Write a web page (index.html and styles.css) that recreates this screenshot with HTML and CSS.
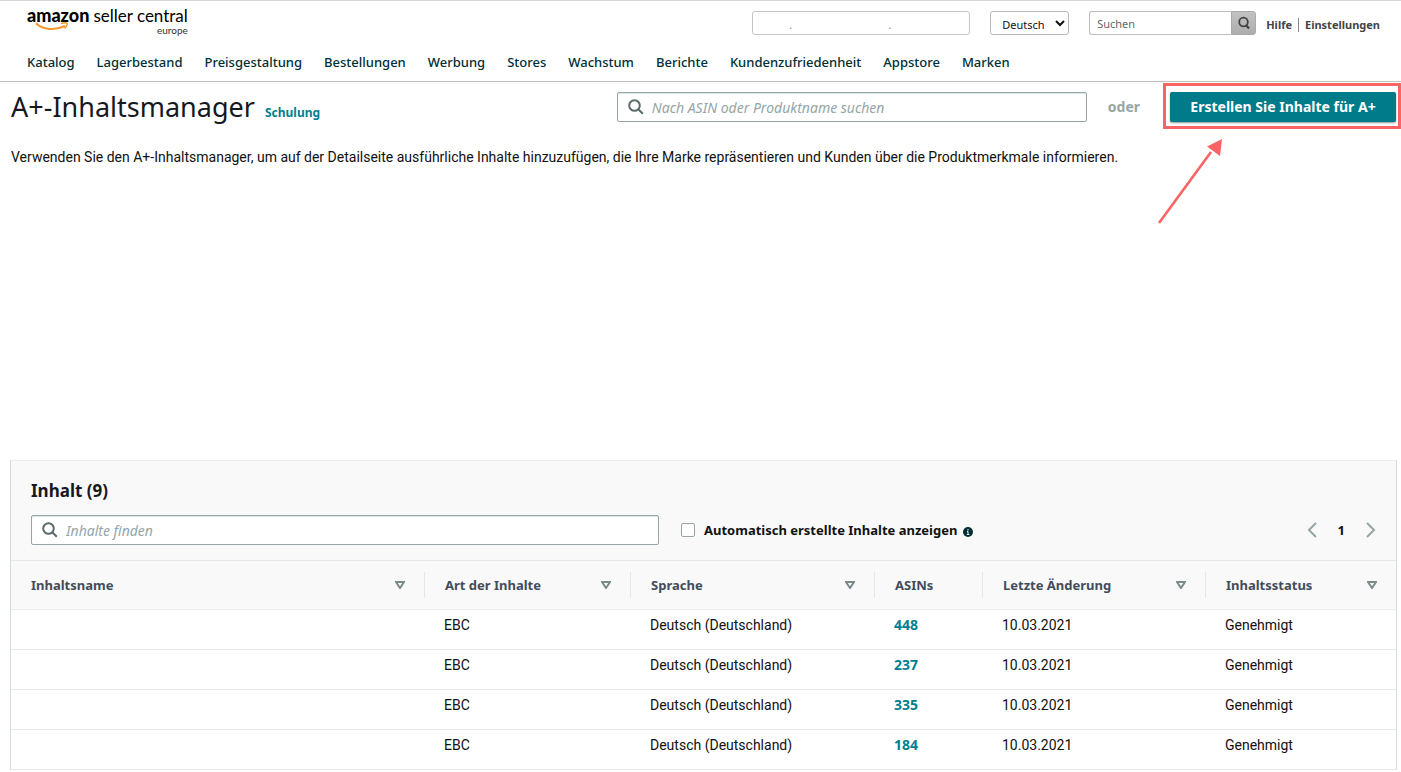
FILE: index.html
```html
<!DOCTYPE html>
<html lang="de">
<head>
<meta charset="utf-8">
<meta name="viewport" content="width=device-width, initial-scale=1">
<title>A+-Inhaltsmanager</title>
<link rel="stylesheet" href="styles.css">
</head>
<body>
<header class="site-header">
  <div class="topbar">
    <a class="logo" href="#" aria-label="amazon seller central europe">
      <span class="logo-line"><span class="logo-brand">amazon</span><span class="logo-product">seller central</span></span>
      <span class="logo-region">europe</span>
      <svg class="logo-smile" viewBox="0 0 34 9" aria-hidden="true"><path d="M1 1.200C8 8 20 8.800 30 4" fill="none" stroke="#f7982f" stroke-width="2"/><path d="M26 1.600C29 .8 31.500.8 32 1.400S31.400 4.800 29.600 6.500" fill="none" stroke="#f7982f" stroke-width="1.600"/></svg>
    </a>
    <div class="tools">
      <button class="account" type="button" aria-label="Konto auswählen"><span>.</span><span>.</span></button>
      <div class="language">
        <select aria-label="Sprache"><option>Deutsch</option></select>
        <svg viewBox="0 0 10 7" aria-hidden="true"><path d="M1 1l4 4 4-4" fill="none" stroke="#111" stroke-width="2"/></svg>
      </div>
      <form class="site-search">
        <input type="text" placeholder="Suchen" aria-label="Suchen">
        <button type="button" aria-label="Suche starten"><svg viewBox="0 0 14 14" aria-hidden="true"><circle cx="6.500" cy="6" r="4.300" fill="none" stroke="#444" stroke-width="1.800"/><path d="M9 9l3 3.500" stroke="#444" stroke-width="2.200"/></svg></button>
      </form>
      <div class="links"><a href="#">Hilfe</a><a href="#">Einstellungen</a></div>
    </div>
  </div>
  <nav class="main-nav">
    <a href="#">Katalog</a><a href="#">Lagerbestand</a><a href="#">Preisgestaltung</a><a href="#">Bestellungen</a><a href="#">Werbung</a><a href="#">Stores</a><a href="#">Wachstum</a><a href="#">Berichte</a><a href="#">Kundenzufriedenheit</a><a href="#">Appstore</a><a href="#">Marken</a>
  </nav>
</header>
<main class="page">
  <div class="page-head">
    <h1>A+-Inhaltsmanager</h1>
    <a class="training" href="#">Schulung</a>
    <div class="actions">
      <div class="search-field asin-search">
        <svg viewBox="0 0 16 16" aria-hidden="true"><circle cx="6.500" cy="6.500" r="5.300"/><path d="M10.300 10.300l4.500 4.500"/></svg>
        <input type="text" placeholder="Nach ASIN oder Produktname suchen" aria-label="Nach ASIN oder Produktname suchen">
      </div>
      <span class="or">oder</span>
      <div class="create">
        <button type="button">Erstellen Sie Inhalte für A+</button>
        <svg class="arrow" viewBox="0 0 66 88" aria-hidden="true"><path d="M2 84L54 13" stroke="#fa6464" stroke-width="2.600"/><path d="M65 0L50 7.500L63 17Z" fill="#fa6464"/></svg>
      </div>
    </div>
  </div>
  <p class="intro">Verwenden Sie den A+-Inhaltsmanager, um auf der Detailseite ausführliche Inhalte hinzuzufügen, die Ihre Marke repräsentieren und Kunden über die Produktmerkmale informieren.</p>
  <section class="panel">
    <div class="panel-head">
      <h2>Inhalt (9)</h2>
      <div class="filters">
        <div class="search-field content-search">
          <svg viewBox="0 0 16 16" aria-hidden="true"><circle cx="6.500" cy="6.500" r="5.300"/><path d="M10.300 10.300l4.500 4.500"/></svg>
          <input type="text" placeholder="Inhalte finden" aria-label="Inhalte finden">
        </div>
        <div class="auto">
          <input type="checkbox" id="auto"><label for="auto">Automatisch erstellte Inhalte anzeigen</label>
          <svg viewBox="0 0 10 10" aria-hidden="true"><circle cx="5" cy="5" r="5" fill="#002f36"/><path d="M5 2v1.500M4 4.500h1v3M3.800 7.500h2.600" stroke="#fff" fill="none"/></svg>
        </div>
        <div class="pager">
          <button type="button" aria-label="Vorherige Seite"><svg viewBox="0 0 10 16" aria-hidden="true"><path d="M9 1L2 8l7 7"/></svg></button>
          <span>1</span>
          <button type="button" aria-label="Nächste Seite"><svg viewBox="0 0 10 16" aria-hidden="true"><path d="M1 1l7 7-7 7"/></svg></button>
        </div>
      </div>
    </div>
    <table>
      <colgroup><col><col class="col-type"><col class="col-lang"><col class="col-asin"><col class="col-date"><col class="col-status"></colgroup>
      <thead><tr>
        <th><div>Inhaltsname<svg viewBox="0 0 10 8" aria-hidden="true"><path d="M1 1h8L5 7z"/></svg></div></th>
        <th><div>Art der Inhalte<svg viewBox="0 0 10 8" aria-hidden="true"><path d="M1 1h8L5 7z"/></svg></div></th>
        <th><div>Sprache<svg viewBox="0 0 10 8" aria-hidden="true"><path d="M1 1h8L5 7z"/></svg></div></th>
        <th><div>ASINs</div></th>
        <th><div>Letzte Änderung<svg viewBox="0 0 10 8" aria-hidden="true"><path d="M1 1h8L5 7z"/></svg></div></th>
        <th><div>Inhaltsstatus<svg viewBox="0 0 10 8" aria-hidden="true"><path d="M1 1h8L5 7z"/></svg></div></th>
      </tr></thead>
      <tbody>
        <tr><td></td><td>EBC</td><td>Deutsch (Deutschland)</td><td><a href="#">448</a></td><td>10.03.2021</td><td>Genehmigt</td></tr>
        <tr><td></td><td>EBC</td><td>Deutsch (Deutschland)</td><td><a href="#">237</a></td><td>10.03.2021</td><td>Genehmigt</td></tr>
        <tr><td></td><td>EBC</td><td>Deutsch (Deutschland)</td><td><a href="#">335</a></td><td>10.03.2021</td><td>Genehmigt</td></tr>
        <tr><td></td><td>EBC</td><td>Deutsch (Deutschland)</td><td><a href="#">184</a></td><td>10.03.2021</td><td>Genehmigt</td></tr>
      </tbody>
    </table>
  </section>
</main>
</body>
</html>
```
FILE: styles.css
```css
* { box-sizing: border-box; }
body { margin: 0; background: #fff; color: #111; font: 14px/20px "Noto Sans", "Open Sans", sans-serif; }
a { color: inherit; text-decoration: none; }
button, input, select { font: inherit; color: inherit; margin: 0; }
svg { display: block; flex: none; }

.site-header { border-top: 1px solid #d5d6da; border-bottom: 1px solid #bfc1c1; padding: 5px 21px 9px 27px; }
.topbar { display: flex; justify-content: space-between; align-items: flex-start; height: 36px; }
.logo { position: relative; display: flex; flex-direction: column; align-items: flex-end; color: #000; font-family: Lato, sans-serif; }
.logo-line { display: flex; align-items: baseline; gap: 4px; font-size: 17px; line-height: 18px; }
.logo-brand { font-size: 18px; font-weight: 900; }
.logo-region { font-size: 10px; line-height: 10px; color: #333; }
.logo-smile { position: absolute; left: 8px; top: 16px; width: 34px; height: 9px; }
.tools { display: flex; align-items: center; padding-top: 5px; font-size: 11px; line-height: 14px; }
.account { width: 218px; height: 24px; border: 1px solid #c4c6c6; border-radius: 3px; background: #fff; display: flex; align-items: center; gap: 96px; padding: 4px 36px 0; color: #888; }
.language { position: relative; margin-left: 20px; }
.language select { display: block; width: 79px; height: 24px; border: 1px solid #b8baba; border-radius: 3px; background: #fff; padding: 3px 11px 0; font-size: 11px; appearance: none; }
.language svg { position: absolute; right: 4px; top: 9px; width: 10px; height: 7px; }
.site-search { display: flex; margin-left: 20px; height: 24px; }
.site-search input { width: 142px; border: 1px solid #bcbebe; border-right: 0; border-radius: 3px 0 0 3px; padding: 2px 7px 0; }
.site-search input::placeholder { color: #666; opacity: 1; }
.site-search button { width: 25px; padding: 0 5px; border: 1px solid #aaa; border-radius: 0 3px 3px 0; background: linear-gradient(#c2c2c2, #adadad); }
.site-search svg { width: 14px; height: 14px; }
.links { display: flex; margin-left: 10px; padding-top: 3px; color: #444; font-weight: 700; }
.links a + a { margin-left: 6px; padding-left: 6px; border-left: 1px solid #888; }
.main-nav { display: flex; gap: 22px; padding-top: 10px; color: #002f36; font-size: 13px; font-weight: 500; white-space: nowrap; }

.page { padding: 10px 4px 0 10px; }
.page-head { display: flex; align-items: center; height: 30px; padding-left: 1px; }
h1 { margin: 0; font-size: 27px; line-height: 30px; font-weight: 400; color: #16191f; white-space: nowrap; }
.training { margin-left: 10px; padding-top: 11px; font-size: 12px; font-weight: 700; color: #007f8f; }
.actions { display: flex; align-items: center; margin-left: auto; padding-right: 1px; }
.search-field { display: flex; align-items: center; gap: 8px; height: 30px; padding: 0 10px; background: #fff; border: 1px solid #95a5a6; border-radius: 2px; box-shadow: inset 0 1px 1px #dde3e3; }
.search-field svg { width: 16px; height: 16px; fill: none; stroke: #5b6b6c; stroke-width: 2; }
.search-field input { flex: 1; min-width: 0; border: 0; padding: 2px 0 0; background: none; }
.search-field input::placeholder { color: #95a5a6; font-style: italic; opacity: 1; }
.asin-search { width: 470px; }
.or { margin: 0 30px 0 21px; color: #95a5a6; font-weight: 700; }
.create { position: relative; }
.create::before { content: ""; position: absolute; inset: -9px -5px -7px -7px; border: 3px solid #fa6464; pointer-events: none; }
.create button { display: block; width: 226px; height: 30px; padding: 0; border: 0; border-radius: 2px; background: #007b8a; box-shadow: 0 1px 2px #8a9a9a; color: #fff; font-weight: 700; white-space: nowrap; }
.arrow { position: absolute; left: -13px; top: 47px; width: 66px; height: 88px; }
.intro { margin: 25px 1px 0; color: #111; font-family: Roboto, sans-serif; }

.panel { margin-top: 293px; border: 1px solid #d5dbdb; border-top-color: #eaeded; border-bottom: 0; }
.panel-head { padding: 20px 20px 15px; background: #f9f9f9; border-bottom: 1px solid #e6e8e8; }
h2 { margin: 0 0 14px; font-size: 17px; line-height: 20px; font-weight: 700; color: #16191f; }
.filters { display: flex; align-items: center; }
.content-search { width: 628px; }
.auto { display: flex; align-items: center; margin-left: 22px; font-size: 13px; font-weight: 700; }
.auto input { appearance: none; width: 14px; height: 14px; margin-right: 9px; border: 1px solid #95a5a6; border-radius: 2px; background: #fff; }
.auto svg { width: 10px; height: 10px; margin: 3px 0 0 6px; }
.pager { display: flex; align-items: center; gap: 21px; margin-left: auto; font-size: 13px; font-weight: 700; }
.pager button { border: 0; padding: 0; background: none; }
.pager button svg { width: 10px; height: 16px; fill: none; stroke: #95a5a6; stroke-width: 2; }
table { width: 100%; table-layout: fixed; border-collapse: separate; border-spacing: 0; }
.col-type { width: 206px; }
.col-lang { width: 244px; }
.col-asin { width: 108px; }
.col-date { width: 223px; }
.col-status { width: 190px; }
th { height: 49px; padding: 0; text-align: left; font-size: 13px; color: #414d5c; background: #f9f9f9; border-bottom: 1px solid #eaeded; }
th div { display: flex; align-items: center; justify-content: space-between; height: 26px; padding: 0 19px 0 20px; border-right: 1px solid #e4e7e7; }
th:last-child div { border: 0; }
th svg { width: 10px; height: 8px; fill: none; stroke: #7b8b8b; stroke-width: 2; }
td { height: 40px; padding: 0 20px 9px 19px; border-bottom: 1px solid #e6eaea; vertical-align: middle; font-family: Roboto, sans-serif; }
td a { color: #007f8f; font-family: "Noto Sans", sans-serif; font-weight: 700; }
```
